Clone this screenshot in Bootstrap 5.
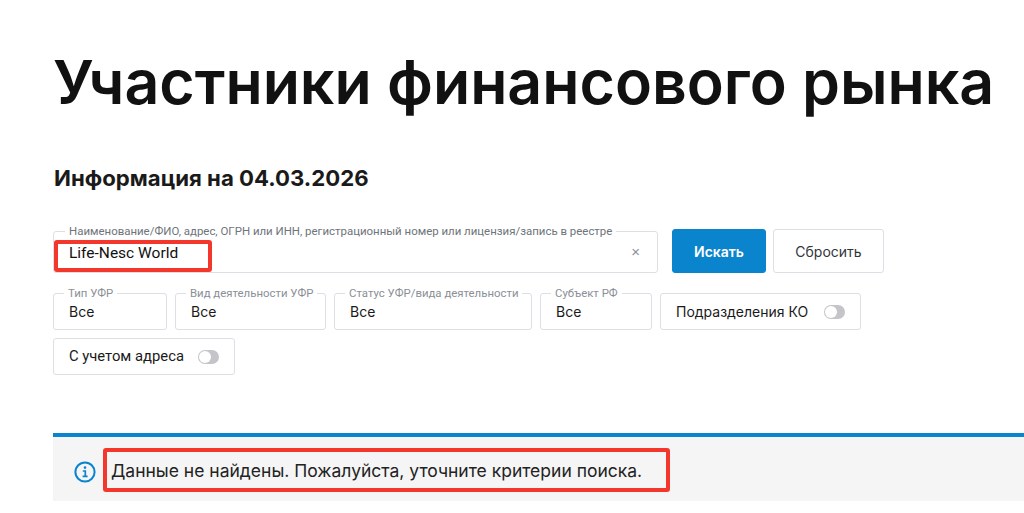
<!DOCTYPE html>
<html lang="ru">
<head>
  <meta charset="UTF-8">
  <meta name="viewport" content="width=device-width, initial-scale=1.0">
  <title>Участники финансового рынка</title>
  <link rel="stylesheet" href="https://cdn.jsdelivr.net/npm/bootstrap@5.3.2/dist/css/bootstrap.min.css">
  <style>
    body { font-family: Inter, "Noto Sans", sans-serif; color: #1a1a1a; background: #fff; overflow: hidden; }
    .page-wrap { padding: 42px 0 0 53px; }
    .page-title { font-size: 60.8px; font-weight: 600; line-height: 80px; margin: 0 0 42px 0; color: #111; white-space: nowrap; }
    .page-sub { font-size: 22.2px; font-weight: 700; line-height: 28px; margin: 0 0 37px 1px; }
    .search-row { height: 44px; align-items: flex-end; margin-bottom: 20px; }
    .ufr-field { position: relative; border: 1px solid #dcdfe3; border-radius: 3px; height: 37px; padding: 0 15px; display: flex; align-items: center; font-size: 14px; flex: none; background: #fff; }
    .ufr-label { position: absolute; left: 10px; top: -8px; padding: 0 4px; background: #fff; font-family: Roboto, sans-serif; font-size: 11.4px; line-height: 14px; color: #8a8f96; white-space: nowrap; }
    .field-main { width: 605px; height: 42px; }
    .field-main .ufr-label { left: 11px; font-size: 11.45px; color: #6e747b; }
    .field-main .query { font-family: Roboto, sans-serif; font-size: 15.5px; color: #111; padding-top: 4px; }
    .clear-x { margin-left: auto; margin-right: 2px; color: #8a8f96; font-size: 15px; font-family: "Liberation Sans", sans-serif; }
    .w-type { width: 114px; } .w-kind { width: 151px; } .w-status { width: 198px; } .w-region { width: 112px; }
    .w-branch { width: 201px; } .w-addr { width: 182px; font-family: Roboto, sans-serif; font-size: 14.8px; }
    .btn-find { width: 94px; height: 44px; margin-left: 14px; background: #0a84cc; border-color: #0a84cc; color: #fff; font-size: 14px; font-weight: 600; border-radius: 3px; }
    .btn-reset { width: 111px; height: 44px; margin-left: 7px; background: #fff; border: 1px solid #dcdfe3; color: #33363a; font-size: 14px; border-radius: 3px; }
    .filter-rows { width: 830px; row-gap: 8px; column-gap: 8px; }
    .ufr-switch-wrap { padding: 0; margin: 0 0 0 auto; min-height: 0; display: flex; }
    .form-switch .form-check-input.ufr-switch { width: 21px; height: 14px; margin: 0; background-color: #c3c5c9; border: 0; border-radius: 7px; background-position: left 1px center; background-size: 12px 12px; background-image: url("data:image/svg+xml,%3csvg xmlns='http://www.w3.org/2000/svg' viewBox='-4 -4 8 8'%3e%3ccircle r='4' fill='%23fff'/%3e%3c/svg%3e"); }
    .notice-box { position: relative; margin-top: 58px; height: 68px; background: #f5f5f6; border-top: 4px solid #0a84cc; font-size: 17.5px; color: #222; }
    .notice-icon { position: absolute; left: 21px; top: 24px; }
    .notice-text { padding-left: 58px; line-height: 68px; }
    .red-mark { position: absolute; border: 4px solid #f4372d; border-radius: 3px; pointer-events: none; }
    .mark-query { left: 0; top: 8px; width: 158px; height: 32px; }
    .mark-notice { left: 50px; top: 11px; width: 567px; height: 44px; }
  </style>
</head>
<body>
<div class="page-wrap">
  <h1 class="page-title">Участники финансового рынка</h1>
  <h2 class="page-sub">Информация на 04.03.2026</h2>

  <div class="d-flex search-row">
    <div class="ufr-field field-main">
      <span class="ufr-label">Наименование/ФИО, адрес, ОГРН или ИНН, регистрационный номер или лицензия/запись в реестре</span>
      <span class="query">Life-Nesc World</span>
      <span class="clear-x">×</span>
      <span class="red-mark mark-query"></span>
    </div>
    <button class="btn btn-find" type="button">Искать</button>
    <button class="btn btn-reset" type="button">Сбросить</button>
  </div>

  <div class="d-flex flex-wrap filter-rows">
    <div class="ufr-field w-type"><span class="ufr-label">Тип УФР</span>Все</div>
    <div class="ufr-field w-kind"><span class="ufr-label">Вид деятельности УФР</span>Все</div>
    <div class="ufr-field w-status"><span class="ufr-label">Статус УФР/вида деятельности</span>Все</div>
    <div class="ufr-field w-region"><span class="ufr-label">Субъект РФ</span>Все</div>
    <div class="ufr-field w-branch">Подразделения КО
      <div class="form-check form-switch ufr-switch-wrap"><input class="form-check-input ufr-switch" type="checkbox" role="switch" aria-label="Подразделения КО"></div>
    </div>
    <div class="ufr-field w-addr">С учетом адреса
      <div class="form-check form-switch ufr-switch-wrap"><input class="form-check-input ufr-switch" type="checkbox" role="switch" aria-label="С учетом адреса"></div>
    </div>
  </div>

  <div class="notice-box">
    <svg class="notice-icon" width="22" height="22" viewBox="0 0 22 22" fill="none" stroke="#0a84cc" stroke-width="2">
      <circle cx="11" cy="11" r="9.6"/>
      <path d="M8.8 10h2.5v5.2M8.6 15.4h5" stroke-width="1.7"/>
      <circle cx="11" cy="6.6" r="1.3" fill="#0a84cc" stroke="none"/>
    </svg>
    <div class="notice-text">Данные не найдены. Пожалуйста, уточните критерии поиска.</div>
    <span class="red-mark mark-notice"></span>
  </div>
</div>
</body>
</html>
